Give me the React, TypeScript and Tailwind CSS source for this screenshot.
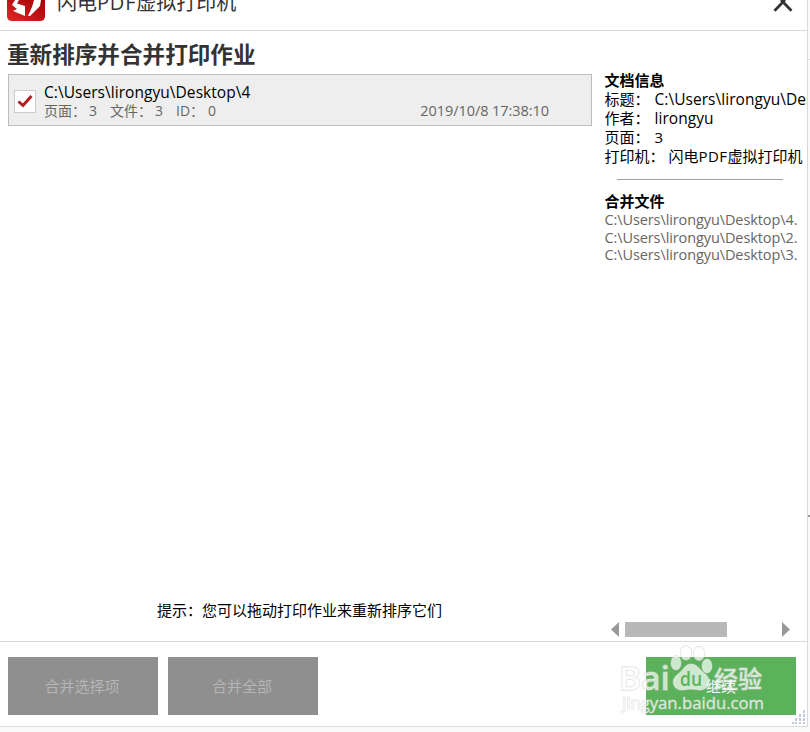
import React from 'react';

const mergedFiles = ['4', '2', '3'];

const AppLogo: React.FC = () => (
  <svg width="38" height="21" viewBox="0 0 38 21" className="shrink-0">
    <defs>
      <linearGradient id="logoRed" x1="0" y1="1" x2="1" y2="0">
        <stop offset="0" stopColor="#e12a28" />
        <stop offset="0.5" stopColor="#c01215" />
        <stop offset="1" stopColor="#a00508" />
      </linearGradient>
    </defs>
    <path d="M0 0H38V16Q38 21 33 21H5Q0 21 0 16Z" fill="url(#logoRed)" />
    <path d="M8 0H12L10 3.5L18 6L18 16L6 11L10 9L5 5Z" fill="#fff" />
    <path d="M27 0H34L33 6L23 16H21L25 7Z" fill="#fff" />
  </svg>
);

const CloseIcon: React.FC = () => (
  <svg width="20" height="12" viewBox="0 0 20 12">
    <path d="M1.5 10.7L10 2L18.5 10.7M8 0L10 2L12 0" fill="none" stroke="#333" strokeWidth="2.7" />
  </svg>
);

const ResizeGrip: React.FC = () => (
  <svg width="14" height="14" viewBox="0 0 14 14" className="absolute right-[1px] bottom-[2px]">
    <g fill="#c3cadc">
      <path d="M11 0h2v3h-2zM7 4h2v3h-2zM11 4h2v3h-2zM3 8h2v3h-2zM7 8h2v3h-2zM11 8h2v3h-2z" />
      <path d="M0 12h2v2h-2zM3 12h2v2h-2zM7 12h2v2h-2zM11 12h2v2h-2z" />
    </g>
  </svg>
);

const Watermark: React.FC = () => (
  <svg
    width="150"
    height="74"
    viewBox="0 0 150 74"
    className="pointer-events-none absolute top-[644px] left-[618px]"
  >
    <g
      fill="#fff"
      fillOpacity="0.7"
      stroke="#c8c8c8"
      strokeOpacity="0.5"
      strokeWidth="1.4"
      paintOrder="stroke"
      style={{ fontFamily: '"Open Sans", "Noto Sans CJK SC", sans-serif' }}
    >
      <text x="1" y="46" fontSize="33" fontWeight="600" textLength="51" lengthAdjust="spacingAndGlyphs">
        Bai
      </text>
      <ellipse cx="58" cy="19" rx="5" ry="7" />
      <ellipse cx="68" cy="9" rx="5.5" ry="7" />
      <ellipse cx="81" cy="9.5" rx="5.5" ry="7" />
      <ellipse cx="89" cy="22" rx="5" ry="7" />
      <path d="M73 20C79 20 81 25 86 29C96 36 90 47 81 46C76 45 70 45 66 46C56 47 51 37 60 30C66 26 67 20 73 20Z" />
      <text x="96" y="44" fontSize="24" fontWeight="500" textLength="48" lengthAdjust="spacingAndGlyphs">
        经验
      </text>
      <text x="4" y="65" fontSize="15.5" strokeWidth="1" textLength="142" lengthAdjust="spacingAndGlyphs">
        jingyan.baidu.com
      </text>
    </g>
    <text
      x="62"
      y="42"
      fontSize="20"
      fontWeight="600"
      fill="#5cb25b"
      textLength="22"
      lengthAdjust="spacingAndGlyphs"
      style={{ fontFamily: '"Open Sans", sans-serif' }}
    >
      du
    </text>
  </svg>
);

const App: React.FC = () => {
  return (
    <div className="relative h-[732px] w-[810px] overflow-hidden bg-[#fafafa] font-['Open_Sans','Noto_Sans_CJK_SC',sans-serif] text-[15px] text-black">
      <div className="relative flex h-[727px] w-[808px] flex-col overflow-hidden border-r border-b border-[#d9d9d9] bg-white">
        <header className="flex h-[31px] shrink-0 items-start border-b border-[#d9d9d9] pl-[7px]">
          <AppLogo />
          <h1 className="-mt-[10px] ml-[12px] text-[20px] leading-[26px] whitespace-nowrap text-[#333]">
            闪电<span className="tracking-[0.8px]">PDF</span>虚拟打印机
          </h1>
          <button className="mr-[14px] ml-auto" aria-label="关闭">
            <CloseIcon />
          </button>
        </header>

        <main className="flex h-[611px] shrink-0 border-b border-[#d9d9d9]">
          <section className="flex w-[592px] shrink-0 flex-col pl-[8px]">
            <h2 className="-ml-px h-[43px] pt-[9px] text-[22.6px] leading-[30px] font-bold text-[#333]">
              重新排序并合并打印作业
            </h2>
            <div className="flex h-[52px] items-center border border-[#bdbdbd] bg-[#eee] pl-[5px]">
              <span className="mt-[2px] flex h-[23px] w-[22px] items-center justify-center border border-[#ccc] bg-white">
                <svg width="16" height="14" viewBox="0 0 16 14">
                  <path d="M1.5 7.5L6 11.5L14.5 2" fill="none" stroke="#b71c22" strokeWidth="3" />
                </svg>
              </span>
              <div className="mt-[3px] ml-[8px] flex-1 whitespace-nowrap">
                <p className="text-[15.5px] leading-[18px] tracking-[0.05px]">C:\Users\lirongyu\Desktop\4</p>
                <div className="flex text-[14px] leading-[19px] text-[#666]">
                  <span className="w-[45px]">页面：</span>
                  <span className="w-[21px]">3</span>
                  <span className="w-[45px]">文件：</span>
                  <span className="w-[21px]">3</span>
                  <span className="w-[32px]">ID：</span>
                  <span>0</span>
                  <span className="mr-[42px] ml-auto text-[14.5px] tracking-[-0.06px]">2019/10/8 17:38:10</span>
                </div>
              </div>
            </div>
            <p className="mt-auto mb-[20px] pl-[149px] leading-[22px]">提示：您可以拖动打印作业来重新排序它们</p>
          </section>

          <aside className="flex flex-1 flex-col overflow-hidden pl-[12.5px] whitespace-nowrap">
            <div className="mt-[40px] leading-[19px]">
              <h3 className="font-bold">文档信息</h3>
              <p className="flex">
                <span className="w-[50px] shrink-0">标题：</span>
                <span className="text-[15.5px] tracking-[0.05px]">C:\Users\lirongyu\Desktop\4</span>
              </p>
              <p className="flex">
                <span className="w-[50px] shrink-0">作者：</span>
                <span className="text-[15.5px] tracking-[0.05px]">lirongyu</span>
              </p>
              <p className="flex">
                <span className="w-[50px] shrink-0">页面：</span>3
              </p>
              <p className="flex">
                <span className="w-[64px] shrink-0">打印机：</span>
                <span>
                  闪电<span className="tracking-[0.4px]">PDF</span>虚拟打印机
                </span>
              </p>
            </div>
            <hr className="mt-[13px] ml-[12px] w-[166px] border-[#a0a0a0]" />
            <h3 className="mt-[12px] leading-[19px] font-bold">合并文件</h3>
            <ul className="text-[14.5px] leading-[17.6px] text-[#666]">
              {mergedFiles.map((name) => (
                <li key={name} className="tracking-[-0.1px]">
                  C:\Users\lirongyu\Desktop\{name}.
                </li>
              ))}
            </ul>
            <div className="mt-auto mb-[4px] flex h-[15px] items-center pl-[6.5px]">
              <svg width="8" height="15" viewBox="0 0 8 15">
                <path d="M8 0V15L0 7.5Z" fill="#999" />
              </svg>
              <div className="ml-[6px] h-[15px] w-[102px] bg-[#b8b8b8]" />
              <svg width="8" height="15" viewBox="0 0 8 15" className="ml-[55px]">
                <path d="M0 0V15L8 7.5Z" fill="#999" />
              </svg>
            </div>
          </aside>
        </main>

        <footer className="flex gap-[10px] pt-[15px] pl-[8px]">
          <button className="h-[58px] w-[150px] bg-[#8f8f8f] pr-[2px] text-[#b5b5b5]">合并选择项</button>
          <button className="h-[58px] w-[150px] bg-[#8f8f8f] pr-[2px] text-[#b5b5b5]">合并全部</button>
          <button className="mr-[11px] ml-auto h-[58px] w-[150px] bg-[#5cb25b] text-white">继续</button>
        </footer>
        <ResizeGrip />
      </div>
      <div className="absolute top-[59px] right-0 h-px w-[2px] bg-[#ddd]" />
      <div className="absolute top-[515px] right-0 h-[2px] w-[2px] bg-[#999]" />
      <Watermark />
    </div>
  );
};

export default App;
